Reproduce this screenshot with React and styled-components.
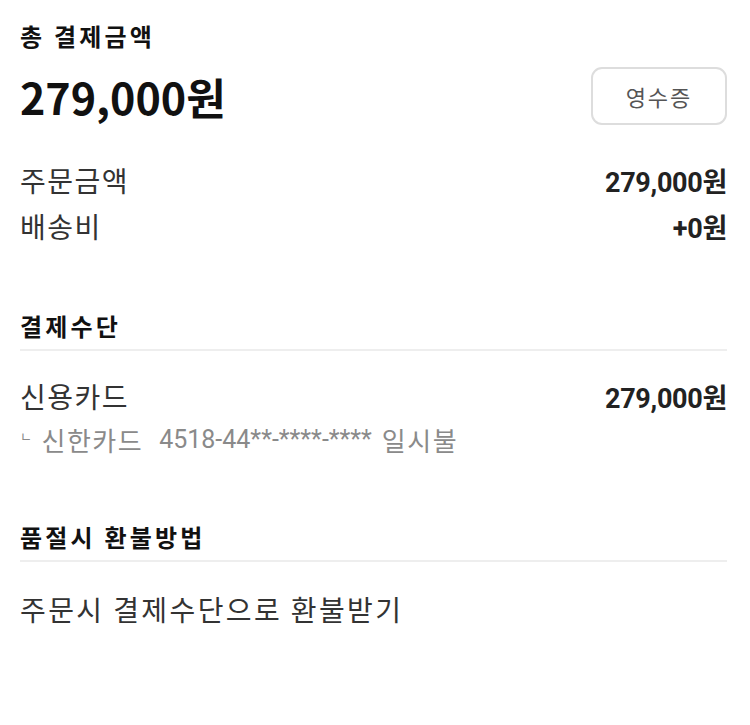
import React from "react";
import styled, { createGlobalStyle } from "styled-components";

const GlobalStyle = createGlobalStyle`
  html, body {
    margin: 0;
    padding: 0;
    background: #fff;
  }
  body {
    font-family: "Noto Sans CJK KR", "Noto Sans", sans-serif;
    color: #222;
  }
`;

const Page = styled.div`
  width: 750px;
  box-sizing: border-box;
  padding: 18px 23px 40px 20px;
`;

const Section = styled.section`
  margin-bottom: ${(p) => p.gap || 0}px;
`;

const Label = styled.h3`
  margin: 0;
  font-size: 24px;
  font-weight: 700;
  line-height: 36px;
  color: #111;
  letter-spacing: 3.2px;
`;

const SectionTitle = styled(Label)`
  padding-bottom: 5px;
  border-bottom: 2px solid #eeeeee;
`;

const TotalRow = styled.div`
  display: flex;
  align-items: center;
  justify-content: space-between;
  margin: 12px 0 31px;
`;

const TotalAmount = styled.div`
  font-size: 43px;
  font-weight: 700;
  color: #111;
  line-height: 60px;
`;

const ReceiptButton = styled.button`
  width: 136px;
  height: 58px;
  border: 2px solid #dddddd;
  border-radius: 11px;
  background: #fff;
  font-family: "Noto Sans CJK KR", sans-serif;
  font-size: 22px;
  color: #555;
  letter-spacing: 2px;
`;

const Row = styled.div`
  display: flex;
  align-items: center;
  justify-content: space-between;
  height: 46px;
`;

const RowLabel = styled.span`
  font-size: 28px;
  color: #333;
  letter-spacing: 1.5px;
`;

const RowValue = styled.span`
  font-family: Roboto, "Noto Sans CJK KR", sans-serif;
  font-size: 27px;
  font-weight: 700;
  color: #222;
  letter-spacing: -0.3px;
`;

const SubLine = styled.div`
  display: flex;
  align-items: center;
  height: 40px;
  font-size: 26px;
  color: #8a8a8a;
  letter-spacing: 1.5px;
`;

const Corner = styled.span`
  font-size: 13px;
  margin: 0 8px 8px 0;
`;

const CardNumber = styled.span`
  font-family: Roboto, "Noto Sans CJK KR", sans-serif;
  font-size: 25px;
  letter-spacing: 0;
  margin: 0 10px 0 16px;
`;

const Body = styled.div`
  padding-top: ${(p) => p.top || 22}px;
`;

const Plain = styled.div`
  font-size: 28px;
  color: #333;
  line-height: 48px;
  letter-spacing: 2.4px;
`;

export default function App() {
  return (
    <>
      <GlobalStyle />
      <Page>
        <Section gap={59}>
          <Label>총 결제금액</Label>
          <TotalRow>
            <TotalAmount>279,000원</TotalAmount>
            <ReceiptButton>영수증</ReceiptButton>
          </TotalRow>
          <Row>
            <RowLabel>주문금액</RowLabel>
            <RowValue>279,000원</RowValue>
          </Row>
          <Row>
            <RowLabel>배송비</RowLabel>
            <RowValue>+0원</RowValue>
          </Row>
        </Section>

        <Section gap={60}>
          <SectionTitle>결제수단</SectionTitle>
          <Body top={22}>
            <Row>
              <RowLabel>신용카드</RowLabel>
              <RowValue>279,000원</RowValue>
            </Row>
            <SubLine>
              <Corner>ㄴ</Corner>
              신한카드
              <CardNumber>4518-44**-****-****</CardNumber>
              일시불
            </SubLine>
          </Body>
        </Section>

        <Section>
          <SectionTitle>품절시 환불방법</SectionTitle>
          <Body top={23}>
            <Plain>주문시 결제수단으로 환불받기</Plain>
          </Body>
        </Section>
      </Page>
    </>
  );
}
